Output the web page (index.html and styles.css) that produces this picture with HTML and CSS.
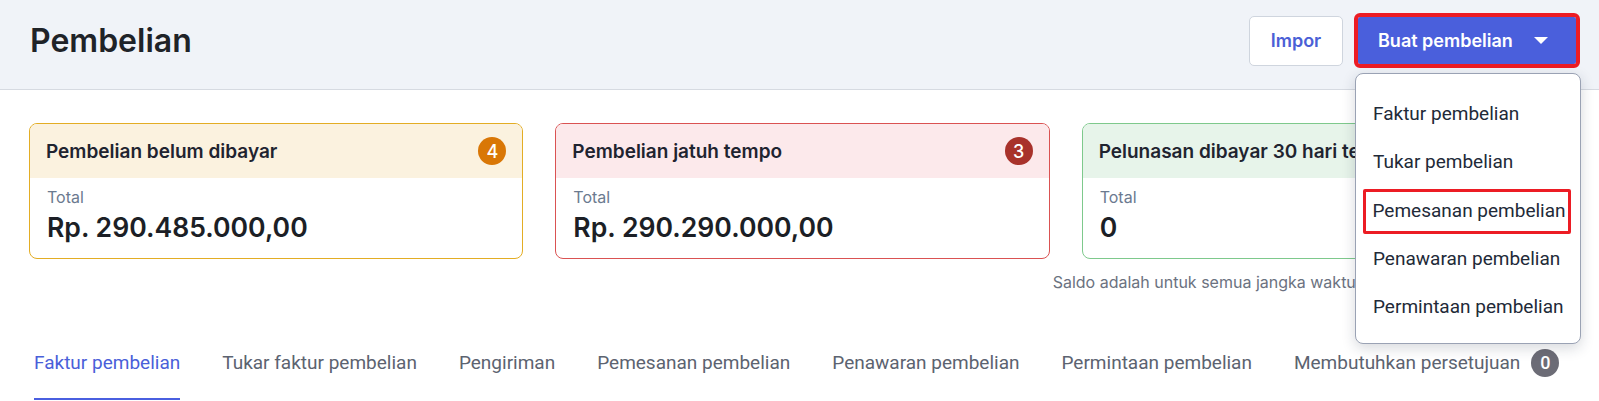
FILE: index.html
```html
<!DOCTYPE html>
<html lang="id">
<head>
<meta charset="utf-8">
<title>Pembelian</title>
<link rel="stylesheet" href="styles.css">
</head>
<body>
<header class="topbar">
  <h1 class="title">Pembelian</h1>
  <div class="actions">
    <button class="btn btn-outline">Impor</button>
    <div class="split">
      <button class="btn btn-primary">Buat pembelian <span class="caret"></span></button>
      <ul class="menu">
        <li class="menu-item">Faktur pembelian</li>
        <li class="menu-item">Tukar pembelian</li>
        <li class="menu-item marked">Pemesanan pembelian</li>
        <li class="menu-item">Penawaran pembelian</li>
        <li class="menu-item">Permintaan pembelian</li>
      </ul>
    </div>
  </div>
</header>
<main class="content">
  <section class="cards">
    <div class="card card-amber">
      <div class="card-head"><span class="card-title">Pembelian belum dibayar</span><span class="badge badge-amber">4</span></div>
      <div class="card-body"><div class="label">Total</div><div class="amount">Rp. 290.485.000,00</div></div>
    </div>
    <div class="card card-red">
      <div class="card-head"><span class="card-title">Pembelian jatuh tempo</span><span class="badge badge-red">3</span></div>
      <div class="card-body"><div class="label">Total</div><div class="amount">Rp. 290.290.000,00</div></div>
    </div>
    <div class="card card-green">
      <div class="card-head"><span class="card-title">Pelunasan dibayar 30 hari terakhir</span><span class="badge badge-green">0</span></div>
      <div class="card-body"><div class="label">Total</div><div class="amount">0</div></div>
    </div>
  </section>
  <div class="note-row">
    <p class="note">Saldo adalah untuk semua jangka waktu</p>
  </div>
  <nav class="tabs">
    <a class="tab active">Faktur pembelian</a>
    <a class="tab">Tukar faktur pembelian</a>
    <a class="tab">Pengiriman</a>
    <a class="tab">Pemesanan pembelian</a>
    <a class="tab">Penawaran pembelian</a>
    <a class="tab">Permintaan pembelian</a>
    <a class="tab">Membutuhkan persetujuan <span class="count">0</span></a>
  </nav>
</main>
</body>
</html>
```
FILE: styles.css
```css
* { box-sizing: border-box; }
html, body { margin: 0; padding: 0; }
body {
  font-family: Inter, "Noto Sans", sans-serif;
  color: #1f2328;
  background: #fff;
  width: 1599px;
  height: 401px;
  overflow: hidden;
}
.topbar {
  height: 90px;
  background: #f0f3f8;
  border-bottom: 1px solid #d6dae1;
  display: flex;
  align-items: center;
  justify-content: space-between;
  padding: 0 23px 0 30px;
}
.title {
  margin: 0;
  font-size: 32px;
  font-weight: 600;
  color: #1f2328;
  position: relative;
  top: -4px;
}
.actions {
  display: flex;
  align-items: center;
  gap: 15px;
  position: relative;
  top: -4px;
}
.btn {
  font-family: Inter, sans-serif;
  font-size: 18px;
  border-radius: 5px;
  cursor: pointer;
}
.btn-outline {
  width: 94px;
  height: 50px;
  background: #fff;
  border: 1px solid #cfd5de;
  color: #4b5fd6;
  font-weight: 600;
}
.split { position: relative; }
.btn-primary {
  width: 218px;
  height: 47px;
  background: #4a5fdc;
  border: none;
  border-radius: 2px;
  color: #fff;
  font-weight: 600;
  outline: 4px solid #ec1c24;
  display: flex;
  align-items: center;
  padding: 0 0 0 20px;
  gap: 21px;
}
.caret {
  width: 0; height: 0;
  border-left: 7px solid transparent;
  border-right: 7px solid transparent;
  border-top: 7px solid #fff;
}
.menu {
  position: absolute;
  top: 56px;
  left: -3px;
  width: 226px;
  margin: 0;
  padding: 16px 0 11.5px;
  list-style: none;
  background: #fff;
  border: 1px solid #9aa2b4;
  border-radius: 8px;
  box-shadow: 0 4px 14px rgba(30, 40, 60, 0.18);
  z-index: 10;
}
.menu-item {
  height: 48.3px;
  line-height: 48.3px;
  padding-left: 17px;
  font-family: Roboto, sans-serif;
  font-size: 19px;
  color: #222a38;
  white-space: nowrap;
}
.menu-item.marked {
  height: 45px;
  line-height: 38px;
  margin: 2px 9px 1.3px 7px;
  padding-left: 6.5px;
  border: 3.5px solid #ec1c24;
  border-radius: 2px;
}
.content { padding: 33px 23px 0 29px; }
.cards {
  display: grid;
  grid-template-columns: repeat(3, 1fr);
  gap: 32px;
}
.card {
  border: 1px solid;
  border-radius: 8px;
  overflow: hidden;
  height: 136px;
}
.card-head {
  height: 54px;
  display: flex;
  align-items: center;
  justify-content: space-between;
  padding: 0 16px;
}
.card-title {
  font-size: 19px;
  font-weight: 600;
  color: #1f2430;
  white-space: nowrap;
}
.badge {
  width: 28px; height: 28px;
  border-radius: 50%;
  color: #fff;
  display: flex;
  align-items: center;
  justify-content: center;
  font-size: 18px;
  font-weight: 500;
  flex: none;
}
.card-amber { border-color: #e3ad24; }
.card-amber .card-head { background: #fbf2df; }
.badge-amber { background: #d97706; }
.card-red { border-color: #da5252; }
.card-red .card-head { background: #fce9eb; }
.badge-red { background: #a8322b; }
.card-green { border-color: #7ec98c; }
.card-green .card-head { background: #e7f4ea; }
.badge-green { background: #2f8a45; }
.card-body { padding: 9px 17px 12px; }
.label {
  font-size: 16px;
  line-height: 21px;
  color: #6b7a8f;
}
.amount {
  font-size: 26.6px;
  line-height: 38px;
  font-weight: 600;
  color: #1c1f26;
}
.note-row {
  display: grid;
  grid-template-columns: repeat(3, 1fr);
  gap: 32px;
  margin-top: 12.5px;
}
.note {
  grid-column: 3;
  margin: 0 0 0 -29px;
  line-height: 20px;
  font-size: 16px;
  color: #6b7280;
  white-space: nowrap;
}
.tabs {
  display: flex;
  align-items: flex-start;
  gap: 42px;
  margin-top: 46px;
  padding-left: 5px;
}
.tab {
  font-family: Roboto, sans-serif;
  font-size: 19px;
  line-height: 24px;
  color: #5c6370;
  padding: 13px 0 23px;
  border-bottom: 2px solid transparent;
  display: flex;
  align-items: center;
  gap: 11px;
  white-space: nowrap;
}
.tab.active {
  color: #4a5fd9;
  border-bottom-color: #4a5fe0;
}
.count {
  width: 28px; height: 28px;
  margin: -2px 0;
  border-radius: 50%;
  background: #6c6c76;
  color: #fff;
  font-size: 18px;
  font-weight: 500;
  display: inline-flex;
  align-items: center;
  justify-content: center;
}
```
